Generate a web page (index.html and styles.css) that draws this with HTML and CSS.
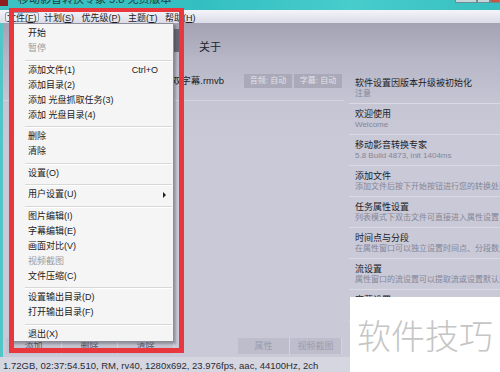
FILE: index.html
```html
<!DOCTYPE html>
<html lang="zh-CN">

<head>
    <meta charset="UTF-8">
    <meta name="viewport" content="width=device-width, initial-scale=1.0">
    <title>移动影音转换专家</title>
    <link rel="stylesheet" href="styles.css">
</head>

<body>
    <div class="window">
        <!-- Title bar -->
        <div class="titlebar">
            <span class="app-icon"></span>
            <span class="title">移动影音转换专家 5.8 免费版本</span>
            <div class="caption-buttons">
                <span class="cap-min"></span>
                <span class="cap-max"></span>
                <span class="cap-close"></span>
            </div>
        </div>

        <!-- Menu bar -->
        <div class="menubar">
            <span class="menubar-item active">文件(<u>F</u>)</span>
            <span class="menubar-item">计划(<u>S</u>)</span>
            <span class="menubar-item">优先级(<u>P</u>)</span>
            <span class="menubar-item">主题(<u>T</u>)</span>
            <span class="menubar-item">帮助(<u>H</u>)</span>
        </div>

        <div class="workspace">
            <div class="sidebar"></div>
            <div class="main">
                <div class="toolbar">
                    <span class="tool-icon"></span>
                    <span class="tool-label">关于</span>
                </div>

                <div class="panes">
                    <div class="tasks">
                        <div class="task-row">
                            <span class="task-name">[高清]阿凡达 国英双语 双字幕.rmvb</span>
                            <span class="badge">音频: 自动</span>
                            <span class="badge">字幕: 自动</span>
                        </div>
                        <div class="task-buttons">
                            <div class="btn-group">
                                <span class="btn">添加</span>
                                <span class="btn">删除</span>
                                <span class="btn">清除</span>
                            </div>
                            <div class="btn-group secondary">
                                <span class="btn">属性</span>
                                <span class="btn">视频截图</span>
                            </div>
                        </div>
                    </div>

                    <div class="tips">
                        <div class="tip">
                            <div class="tip-title">软件设置因版本升级被初始化</div>
                            <div class="tip-sub">注意</div>
                        </div>
                        <div class="tip">
                            <div class="tip-title">欢迎使用</div>
                            <div class="tip-sub">Welcome</div>
                        </div>
                        <div class="tip">
                            <div class="tip-title">移动影音转换专家</div>
                            <div class="tip-sub">5.8 Build 4873, init 1404ms</div>
                        </div>
                        <div class="tip">
                            <div class="tip-title">添加文件</div>
                            <div class="tip-sub">添加文件后按下开始按钮进行您的转换处理</div>
                        </div>
                        <div class="tip">
                            <div class="tip-title">任务属性设置</div>
                            <div class="tip-sub">列表模式下双击文件可直接进入属性设置</div>
                        </div>
                        <div class="tip">
                            <div class="tip-title">时间点与分段</div>
                            <div class="tip-sub">在属性窗口可以独立设置时间点、分段数量</div>
                        </div>
                        <div class="tip">
                            <div class="tip-title">流设置</div>
                            <div class="tip-sub">属性窗口的流设置可以提取流或设置默认流</div>
                        </div>
                        <div class="tip">
                            <div class="tip-title">字幕设置</div>
                            <div class="tip-sub">可以加载外挂字幕并设置字体</div>
                        </div>
                    </div>
                </div>
            </div>
        </div>

        <!-- Status bar -->
        <div class="statusbar">1.72GB, 02:37:54.510, RM, rv40, 1280x692, 23.976fps, aac, 44100Hz, 2ch</div>
    </div>

    <!-- Opened "文件" menu -->
    <div class="file-menu">
        <div class="mi">开始</div>
        <div class="mi disabled">暂停</div>
        <div class="sep"></div>
        <div class="mi">添加文件(1)<span class="shortcut">Ctrl+O</span></div>
        <div class="mi">添加目录(2)</div>
        <div class="mi">添加 光盘抓取任务(3)</div>
        <div class="mi">添加 光盘目录(4)</div>
        <div class="sep"></div>
        <div class="mi">删除</div>
        <div class="mi">清除</div>
        <div class="sep"></div>
        <div class="mi">设置(O)</div>
        <div class="sep"></div>
        <div class="mi">用户设置(U)<span class="submenu-arrow"></span></div>
        <div class="sep"></div>
        <div class="mi">图片编辑(I)</div>
        <div class="mi">字幕编辑(E)</div>
        <div class="mi">画面对比(V)</div>
        <div class="mi disabled">视频截图</div>
        <div class="mi">文件压缩(C)</div>
        <div class="sep"></div>
        <div class="mi">设置输出目录(D)</div>
        <div class="mi">打开输出目录(F)</div>
        <div class="sep"></div>
        <div class="mi">退出(X)</div>
    </div>

    <!-- Red highlight frame -->
    <div class="annotation"></div>

    <div class="watermark">软件技巧</div>
</body>

</html>
```

FILE: styles.css
```css
/* Reset */
* {
    margin: 0;
    padding: 0;
    box-sizing: border-box;
}

body {
    font-family: "Liberation Sans", "Noto Sans CJK SC", sans-serif;
    font-size: 9px;
    color: #222;
    width: 500px;
    height: 372px;
    overflow: hidden;
    position: relative;
    background: #d6d6e0;
}

.window {
    display: flex;
    flex-direction: column;
    height: 372px;
}

/* Title bar */
.titlebar {
    height: 10px;
    flex-shrink: 0;
    display: flex;
    overflow: hidden;
    background: linear-gradient(90deg, #3cc2c3, #33bfc1 40%, #48cccc 70%, #36bfc0);
}

.app-icon {
    width: 8px;
    height: 6px;
    background: #8e2020;
    margin-right: 10px;
}

.title {
    font-size: 11px;
    line-height: 12px;
    margin-top: -7px;
    color: #1f3c3e;
    white-space: nowrap;
}

.caption-buttons {
    margin-left: auto;
    display: flex;
    height: 3px;
}

.caption-buttons span {
    border: 1px solid #6d8e92;
    border-top: none;
    background: #c6d6d8;
}

.cap-min {
    width: 22px;
}

.cap-max {
    width: 13px;
}

.cap-close {
    width: 10px;
    background: #c9573f !important;
}

/* Menu bar */
.menubar {
    height: 13px;
    flex-shrink: 0;
    display: flex;
    align-items: center;
    padding-left: 5px;
    background: linear-gradient(#f4f4f9, #dcdce8);
}

.menubar-item {
    height: 10px;
    line-height: 10px;
    padding: 0 1px;
    margin-right: 3.5px;
    border: 1px solid transparent;
    white-space: nowrap;
    color: #1e1e1e;
}

.menubar-item.active {
    border-color: #8d9bab;
    background: #e9eef4;
    border-radius: 2px;
}

/* Work area */
.workspace {
    flex: 1;
    display: flex;
    min-height: 0;
}

.sidebar {
    width: 9px;
    border-left: 3px solid #52c5c6;
    background: #e1e6ea;
}

.main {
    flex: 1;
    display: flex;
    flex-direction: column;
    background: linear-gradient(#a4a2b4 0, #b6b6c6 35px, #c5c5d4 80px, #c9c9d8 120px);
}

.toolbar {
    height: 50px;
    flex-shrink: 0;
    display: flex;
    padding: 6px 0 0 165px;
}

.tool-icon {
    width: 12px;
    height: 23px;
    border-radius: 2px;
    background: linear-gradient(90deg, #8a8a9a, #5c5c6a);
}

.tool-label {
    margin: 12px 0 0 19px;
    font-size: 11px;
    line-height: 13px;
    color: #1e1e28;
}

.panes {
    flex: 1;
    display: flex;
    min-height: 0;
}

/* Task list */
.tasks {
    width: 341px;
    display: flex;
    flex-direction: column;
}

.task-row {
    display: flex;
    justify-content: flex-end;
    align-items: center;
    padding: 1px 2px 12px 0;
    border-bottom: 1px solid #d3d3df;
}

.task-name {
    font-size: 9.5px;
    line-height: 14px;
    margin-right: 18px;
    white-space: nowrap;
    color: #1e1e1e;
}

.badge {
    width: 48px;
    height: 14px;
    line-height: 14px;
    margin-left: 2px;
    text-align: center;
    font-size: 8px;
    background: #a9a9b9;
    color: #e2e2ea;
}

.task-buttons {
    margin-top: auto;
    margin-bottom: 3px;
    height: 16px;
    display: flex;
}

.btn-group {
    display: flex;
    margin-left: 3px;
}

.btn-group.secondary {
    margin-left: auto;
    margin-right: 2px;
}

.btn {
    width: 56px;
    line-height: 16px;
    text-align: center;
    background: #c2c2d0;
    color: #5c5c6a;
    border-right: 1px solid #d4d4de;
}

.secondary .btn {
    width: 52px;
    background: #bdbdcb;
    color: #9c9cae;
}

/* Tips list */
.tips {
    flex: 1;
    padding-left: 5px;
    overflow: hidden;
    white-space: nowrap;
}

.tip {
    padding: 4px 0 4px 6px;
    border-bottom: 1px solid #dadae4;
}

.tip-title {
    font-size: 9px;
    line-height: 12px;
    color: #1c1c24;
}

.tip-sub {
    font-size: 8px;
    line-height: 10px;
    color: #868694;
}

/* Status bar */
.statusbar {
    height: 15px;
    flex-shrink: 0;
    padding: 3px 0 0 3px;
    line-height: 12px;
    font-size: 9.5px;
    color: #2a2a36;
    white-space: nowrap;
    background: #d6d6e0;
}

/* Dropdown menu */
.file-menu {
    position: absolute;
    left: 11px;
    top: 23px;
    width: 163px;
    height: 319px;
    padding-top: 2px;
    background: #f5f5f5;
    border: 1px solid #8e8e9a;
    box-shadow: 2px 2px 2px rgba(0, 0, 0, 0.25);
}

.mi {
    display: flex;
    align-items: center;
    height: 15px;
    line-height: 15px;
    padding: 0 15px 0 16px;
    white-space: nowrap;
    color: #1a1a1a;
}

.mi.disabled {
    color: #9c9c9c;
}

.shortcut {
    margin-left: auto;
}

.submenu-arrow {
    margin-left: auto;
    margin-right: -8px;
    border-left: 3px solid #222;
    border-top: 3px solid transparent;
    border-bottom: 3px solid transparent;
}

.sep {
    height: 1px;
    margin: 3.5px 1px 2px 13px;
    background: #d8d8d8;
    box-shadow: 0 1px 0 #fff;
}

/* Red highlight */
.annotation {
    position: absolute;
    left: 9px;
    top: 8px;
    width: 175px;
    height: 345px;
    border: 5px solid #e8383e;
    border-top-width: 4px;
}

/* Watermark */
.watermark {
    position: absolute;
    left: 350px;
    top: 297px;
    width: 150px;
    height: 75px;
    display: flex;
    align-items: center;
    justify-content: center;
    background: #fff;
    color: #c5c5c5;
    font-family: "Noto Sans CJK SC", sans-serif;
    font-size: 34px;
    font-weight: 300;
}
```
